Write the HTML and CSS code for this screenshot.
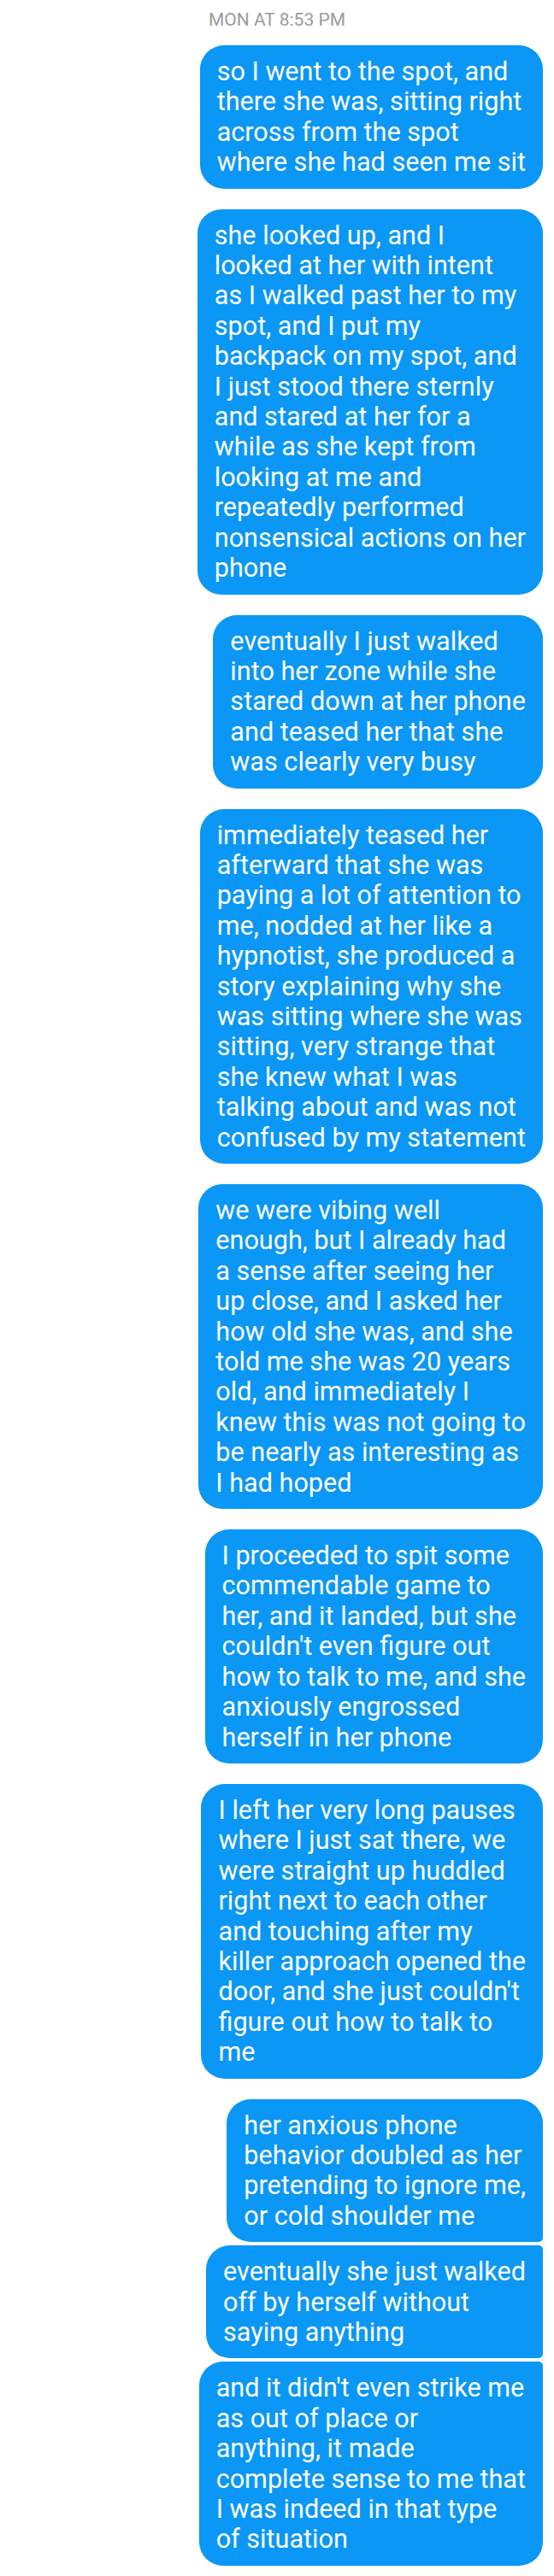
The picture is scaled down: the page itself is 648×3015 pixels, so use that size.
FILE: index.html
```html
<!DOCTYPE html>
<html lang="en">
<head>
<meta charset="utf-8">
<title>Messages</title>
<link rel="stylesheet" href="styles.css">
</head>
<body>
<main class="thread">
  <div class="timestamp">MON AT 8:53 PM</div>

  <p class="bubble">so I went to the spot, and<br>there she was, sitting right<br>across from the spot<br>where she had seen me sit</p>

  <p class="bubble">she looked up, and I<br>looked at her with intent<br>as I walked past her to my<br>spot, and I put my<br>backpack on my spot, and<br>I just stood there sternly<br>and stared at her for a<br>while as she kept from<br>looking at me and<br>repeatedly performed<br>nonsensical actions on her<br>phone</p>

  <p class="bubble">eventually I just walked<br>into her zone while she<br>stared down at her phone<br>and teased her that she<br>was clearly very busy</p>

  <p class="bubble">immediately teased her<br>afterward that she was<br>paying a lot of attention to<br>me, nodded at her like a<br>hypnotist, she produced a<br>story explaining why she<br>was sitting where she was<br>sitting, very strange that<br>she knew what I was<br>talking about and was not<br>confused by my statement</p>

  <p class="bubble">we were vibing well<br>enough, but I already had<br>a sense after seeing her<br>up close, and I asked her<br>how old she was, and she<br>told me she was 20 years<br>old, and immediately I<br>knew this was not going to<br>be nearly as interesting as<br>I had hoped</p>

  <p class="bubble">I proceeded to spit some<br>commendable game to<br>her, and it landed, but she<br>couldn't even figure out<br>how to talk to me, and she<br>anxiously engrossed<br>herself in her phone</p>

  <p class="bubble">I left her very long pauses<br>where I just sat there, we<br>were straight up huddled<br>right next to each other<br>and touching after my<br>killer approach opened the<br>door, and she just couldn't<br>figure out how to talk to<br>me</p>

  <div class="group">
    <p class="bubble bubble-first">her anxious phone<br>behavior doubled as her<br>pretending to ignore me,<br>or cold shoulder me</p>
    <p class="bubble bubble-middle">eventually she just walked<br>off by herself without<br>saying anything</p>
    <p class="bubble bubble-last">and it didn't even strike me<br>as out of place or<br>anything, it made<br>complete sense to me that<br>I was indeed in that type<br>of situation</p>
  </div>
</main>
</body>
</html>
```

FILE: styles.css
```css
html, body {
  margin: 0;
  padding: 0;
  background: #ffffff;
}

body {
  font-family: Roboto, "Noto Sans", "Liberation Sans", sans-serif;
}

.thread {
  display: flex;
  flex-direction: column;
  align-items: flex-end;
  gap: 24px;
  padding: 11px 13px 14px 13px;
}

.timestamp {
  align-self: stretch;
  text-align: center;
  font-size: 21px;
  line-height: 24px;
  color: #9b9b9b;
  margin-bottom: -6px;
}

.bubble {
  margin: 0;
  width: fit-content;
  padding: 13px 20px;
  background: #0a97f5;
  color: #ffffff;
  font-size: 30.6px;
  line-height: 35.4px;
  white-space: nowrap;
  border-radius: 28px;
}

.group {
  display: flex;
  flex-direction: column;
  align-items: flex-end;
  gap: 4px;
}

.bubble-first {
  border-bottom-right-radius: 5px;
}

.bubble-middle {
  border-top-right-radius: 5px;
  border-bottom-right-radius: 5px;
}

.bubble-last {
  border-top-right-radius: 5px;
}
```
